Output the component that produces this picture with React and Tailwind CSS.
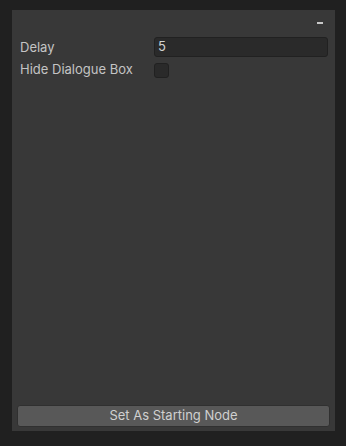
export default function App() {
  return (
    <div
      className="w-[346px] h-[446px] bg-[#202020] pt-[10px] pl-[12px] pr-[11px] pb-[15px] flex"
      style={{ fontFamily: "Inter, 'Liberation Sans', sans-serif" }}
    >
      <div className="flex-1 bg-[#383838] flex flex-col px-[5px] pb-[4px]">
        <div className="flex justify-end h-[22px] items-center pr-[7px] pt-[3px]">
          <div className="w-[6px] h-[2px] bg-[#c8c8c8]"></div>
        </div>
        <div className="flex items-center h-[20px] mt-[5px] pl-[3px]">
          <span className="w-[134px] text-[13px] text-[#c4c4c4] pt-[1px]">Delay</span>
          <div className="flex-1 h-[20px] mr-[2px] bg-[#2a2a2a] border border-[#212121] rounded-[3px] flex items-center px-[3px] text-[13px] text-[#d2d2d2]">
            5
          </div>
        </div>
        <div className="flex items-center h-[20px] mt-[3px] pl-[3px]">
          <span className="w-[134px] text-[13px] text-[#c4c4c4]">Hide Dialogue Box</span>
          <div className="w-[15px] h-[15px] bg-[#2a2a2a] border border-[#212121] rounded-[3px]"></div>
        </div>
        <div className="flex-1"></div>
        <button className="h-[22px] bg-[#585858] border border-[#303030] rounded-[3px] text-[13px] text-[#d0d0d0] flex items-center justify-center">
          Set As Starting Node
        </button>
      </div>
    </div>
  );
}
